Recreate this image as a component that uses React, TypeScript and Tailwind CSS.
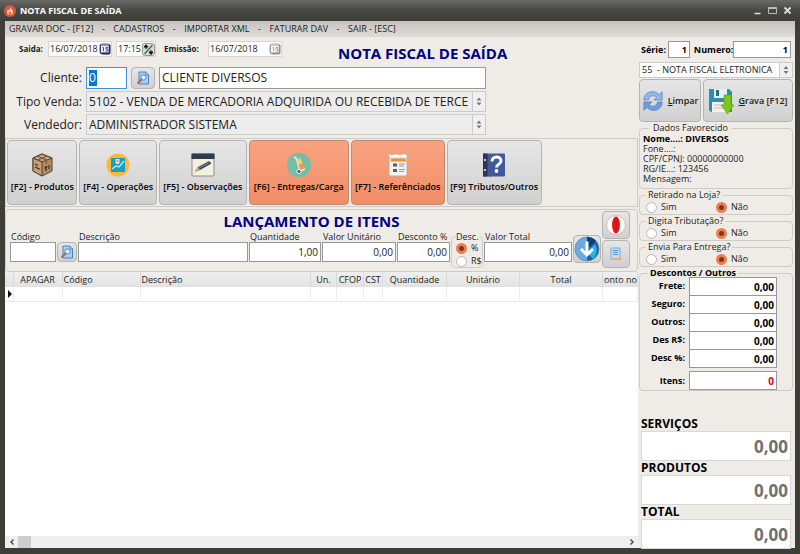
import React from 'react';

const menuItems = ['GRAVAR DOC - [F12]', 'CADASTROS', 'IMPORTAR XML', 'FATURAR DAV', 'SAIR - [ESC]'];

const columns = [
  { label: '', width: 'w-2', align: 'text-left' },
  { label: 'APAGAR', width: 'w-[49px]', align: 'text-center' },
  { label: 'Código', width: 'w-[78px]', align: 'text-left' },
  { label: 'Descrição', width: 'w-auto', align: 'text-left' },
  { label: 'Un.', width: 'w-[26px]', align: 'text-center' },
  { label: 'CFOP', width: 'w-[27px]', align: 'text-center' },
  { label: 'CST', width: 'w-[19px]', align: 'text-center' },
  { label: 'Quantidade', width: 'w-16', align: 'text-center' },
  { label: 'Unitário', width: 'w-[73px]', align: 'text-center' },
  { label: 'Total', width: 'w-[83px]', align: 'text-center' },
  { label: 'onto no', width: 'w-[35px]', align: 'text-left' },
];

const discounts = [
  { id: 'frete', label: 'Frete:', value: '0,00' },
  { id: 'seguro', label: 'Seguro:', value: '0,00' },
  { id: 'outros', label: 'Outros:', value: '0,00' },
  { id: 'desrs', label: 'Des R$:', value: '0,00' },
  { id: 'descpct', label: 'Desc %:', value: '0,00' },
];

const buttonStyle = 'rounded border border-[#b4b4b4] bg-linear-to-b from-[#e6e6e6] to-[#d0d0d0]';
const fieldStyle = 'min-w-0 border border-[#989898] bg-white outline-none';

const FlameIcon = () => (
  <svg viewBox="0 0 24 24" className="h-3 w-3">
    <circle cx="12" cy="12" r="12" fill="#d9534a" />
    <path d="M12 3c1 4 6 6 6 11a6 6 0 0 1-12 0c0-3 2-4 2-6 1 1 2 2 2 3 2-2 3-5 2-8z" fill="#fbd08a" />
    <path d="M12 12c1 2 3 3 3 5a3 3 0 0 1-6 0c0-2 2-3 3-5z" fill="#e8744c" />
  </svg>
);

const CalendarIcon = ({ muted = false }) => (
  <svg viewBox="1 0 12 12" className={muted ? 'h-3 w-3 opacity-50 grayscale' : 'h-3 w-3'}>
    <rect x="1.500" y=".5" width="11" height="11" rx="3" fill="#d8d8d8" stroke="#aaa" />
    <rect x="2.500" y="2" width="9" height="8" fill="#eef0fa" stroke="#3a3f78" />
    <path d="M11.500 2v8.500h-8" fill="none" stroke="#20246a" strokeWidth="1.500" />
    <path d="M4.500 4.500h1v3.500M10 4.500H8v1.500h1.800V8H7.500" fill="none" stroke="#333a66" strokeWidth=".9" />
  </svg>
);

const PlusMinusIcon = () => (
  <svg viewBox="0 0 13 13" className="h-[13px] w-[13px]">
    <rect x=".5" y=".5" width="12" height="12" rx="2" fill="#d6dcd6" stroke="#999" />
    <path d="M2.500 11L10.500 2" stroke="#3f7a50" strokeWidth="1.500" />
    <path d="M4 6V3M2 4l2-2.200L6 4zM9 7v3M7 9l2 2.500L11 9z" fill="#111" stroke="#111" />
  </svg>
);

const SearchDocIcon = () => (
  <svg viewBox="0 0 14 14" className="h-3.5 w-3.5">
    <path d="M3 1h7l2.500 2.500V13H3z" fill="#a9cdf3" stroke="#4a83cc" />
    <path d="M10 1v3h2.500" fill="#e3f0fd" stroke="#4a83cc" />
    <circle cx="7.500" cy="6.500" r="2.600" fill="#e8f4ff" stroke="#5187c4" />
    <path d="M5.500 8.500L2 12" stroke="#a86b48" strokeWidth="1.800" strokeLinecap="round" />
  </svg>
);

const BoxIcon = () => (
  <svg viewBox="0 0 24 24" className="h-6 w-6">
    <path d="M12 1L22 5v13l-10 5L3 18V5z" fill="#b48a63" stroke="#54402f" />
    <path d="M12 1L22 5l-10 4L3 5z" fill="#d0aa80" stroke="#54402f" />
    <path d="M3 5l9 4v14l-9-5z" fill="#c79f78" stroke="#54402f" />
    <path d="M7 3l9.500 4v4M17 3L8 7" fill="none" stroke="#7a5b3f" strokeWidth="1.200" />
    <path d="M5 11l3 1.500M5 14l5 2.300M16 13v5M14.500 15l3-1.500M19 12v4" stroke="#3d2d20" strokeWidth="1.200" />
  </svg>
);

const OperationsIcon = () => (
  <svg viewBox="0 0 24 24" className="h-6 w-6">
    <circle cx="12" cy="12" r="11.500" fill="#fbb936" />
    <rect x="5" y="5" width="14" height="14" rx="1" fill="#159fc0" />
    <path d="M6 16l4-3 3 1 5-6" fill="none" stroke="#bdeaf2" strokeWidth="1.300" />
    <path d="M9.500 6h4v4l-2 1.500-2-1.500z" fill="#f4e3cd" />
    <circle cx="11.500" cy="8" r="1" fill="#e27d4e" />
  </svg>
);

const NotesIcon = () => (
  <svg viewBox="0 0 24 24" className="h-6 w-6">
    <rect x="1" y="1" width="22" height="22" rx="1" fill="#f4efdf" stroke="#8e8e86" />
    <path d="M.5.5h23V6H.5z" fill="#2e3d4d" />
    <path d="M4 18.500l3-4.500L18 8l2.500 2.500L9 17z" fill="#3b4a5b" />
    <path d="M4 19l3-5 2 3z" fill="#d5a77b" />
    <path d="M8 15l10-5.500" stroke="#7c94a8" />
  </svg>
);

const CartIcon = () => (
  <svg viewBox="0 0 24 24" className="h-6 w-6">
    <circle cx="12" cy="12" r="12" fill="#74bda8" />
    <path d="M7 4l2 1 4 13 5-2" fill="none" stroke="#f5f5ee" strokeWidth="1.400" />
    <path d="M9 7l4-2 2.500 5-4.500 2z" fill="#f6cf80" />
    <path d="M11.500 12l5-2 2 5-5.500 2z" fill="#e99c4e" />
    <circle cx="12" cy="18.500" r="2" fill="#3f4d55" stroke="#fff" />
  </svg>
);

const ReportIcon = () => (
  <svg viewBox="0 0 24 24" className="h-6 w-6">
    <path d="M3 2h18v20l-1 1H4l-1-1z" fill="#f4f3ef" stroke="#b9aca0" />
    <path d="M2 1l4 1 4-1 4 1 4-1 3 1v3H4z" fill="#fff" stroke="#c5b6a5" strokeWidth=".7" />
    <path d="M5 5.500h14l1.500 3h-16z" fill="#eb922f" />
    <path d="M7 10.500h4v3H7zM7 16h4v3H7z" fill="#56606c" />
    <path d="M13 11h6M13 13h5M13 16.500h6M13 18.500h5" stroke="#9a9a9a" />
  </svg>
);

const HelpBookIcon = () => (
  <svg viewBox="0 0 24 24" className="h-6 w-6">
    <rect x="1" y=".5" width="22" height="23" rx="1" fill="#3f5a9c" />
    <path d="M1 .5h4.500v23H1z" fill="#2c3455" />
    <circle cx="3" cy="7" r="1" fill="#fff" />
    <circle cx="3" cy="17" r="1" fill="#fff" />
    <path d="M10 8.500c0-6 9-6 9-.5 0 3.500-4.500 3-4.500 6.500" fill="none" stroke="#fff" strokeWidth="3" />
    <circle cx="14.500" cy="18" r="1.900" fill="#fff" />
    <path d="M7 23.500l2-2 1 2z" fill="#d22" />
  </svg>
);

const RefreshIcon = () => (
  <svg viewBox="0 0 24 24" className="h-[22px] w-[22px] shrink-0">
    <path d="M2 11C2 4 8 1 13 2c3 .5 4.500 2 5.500 3L22 2v9h-9l3-3c-3-3-8-2-9 3z" fill="#8db8e8" stroke="#5a86bb" strokeWidth=".8" />
    <path d="M22 13c0 7-6 10-11 9-3-.5-4.500-2-5.500-3L2 22v-9h9l-3 3c3 3 8 2 9-3z" fill="#6b9edb" stroke="#5a86bb" strokeWidth=".8" />
  </svg>
);

const SaveIcon = () => (
  <svg viewBox="0 0 26 26" className="h-[26px] w-[26px] shrink-0">
    <path d="M1 1h20l3 3v20H3l-2-2z" fill="#2f8cb5" />
    <path d="M6 1h13v9H6z" fill="#e5f1f6" />
    <path d="M8 2h3v6H8z" fill="#2b6d8c" />
    <path d="M4 14h17v10H4z" fill="#f4f1e8" />
    <path d="M6 17h10M6 20h9" stroke="#c3bba8" />
    <path d="M16 7h7v10h3l-6.500 9L13 17h3z" fill="#7ac720" stroke="#5aa514" strokeWidth=".6" />
  </svg>
);

const ArrowIcon = () => (
  <svg viewBox="0 0 26 26" className="h-[26px] w-[26px]">
    <circle cx="13" cy="13" r="12" fill="#1764ae" stroke="#777f88" />
    <path d="M13 1a12 12 0 0 0 0 24z" fill="#6baae0" />
    <path d="M13 1a12 12 0 0 1 9 4l-9 8z" fill="#0a3e80" />
    <path d="M21 8a12 12 0 0 1-2 15l-6-7z" fill="#22b4ed" />
    <path d="M13 5.500v13M7 13l6 6 6-6" fill="none" stroke="#fff" strokeWidth="3" />
  </svg>
);

const OperaIcon = () => (
  <svg viewBox="0 0 20 20" className="h-5 w-5">
    <circle cx="10" cy="10" r="9.500" fill="#fff" stroke="#e6a5a5" strokeWidth=".8" />
    <ellipse cx="10" cy="10" rx="4" ry="8.500" fill="#e31919" />
    <path d="M10 5v10" stroke="#c90f0f" strokeWidth="1.500" />
  </svg>
);

const ScrollIcon = () => (
  <svg viewBox="0 0 14 14" className="h-3.5 w-3.5">
    <path d="M2 1h9v11H2z" fill="#c5daf0" stroke="#86abd2" />
    <path d="M4 3.500h5M4 5.500h5M4 7.500h5" stroke="#5e97d1" />
    <path d="M4 11h8.500v2H4z" fill="#eeb25a" />
  </svg>
);

const UpDownIcon = () => (
  <svg viewBox="0 0 12 12" className="h-full w-3">
    <path d="M3.500 5L6 2l2.500 3zM3.500 7L6 10l2.500-3z" fill="#777" />
  </svg>
);

const toolbar = [
  { label: '[F2] - Produtos', icon: BoxIcon, grow: 'grow-[70]', active: false },
  { label: '[F4] - Operações', icon: OperationsIcon, grow: 'grow-[77]', active: false },
  { label: '[F5] - Observações', icon: NotesIcon, grow: 'grow-[88]', active: false },
  { label: '[F6] - Entregas/Carga', icon: CartIcon, grow: 'grow-[100]', active: true },
  { label: '[F7] - Referênciados', icon: ReportIcon, grow: 'grow-[94]', active: true },
  { label: '[F9] Tributos/Outros', icon: HelpBookIcon, grow: 'grow-[95]', active: false },
];

type SelectProps = { id: string; label: string; option: string; className: string };

const SelectBox = ({ id, label, option, className }: SelectProps) => (
  <div className={`relative flex min-w-0 border border-[#cbcbcb] ${className}`}>
    <select id={id} aria-label={label} className="w-full appearance-none truncate bg-transparent pr-3 pl-0.5 outline-none">
      <option>{option}</option>
    </select>
    <span className="pointer-events-none absolute inset-y-0 right-0 border-l border-[#cbcbcb] bg-[#f0f0f0]">
      <UpDownIcon />
    </span>
  </div>
);

type RadioProps = { name: string; label: string; checked?: boolean };

const Radio = ({ name, label, checked = false }: RadioProps) => (
  <label className="flex items-center gap-1">
    <input
      type="radio"
      name={name}
      defaultChecked={checked}
      className="h-[11px] w-[11px] shrink-0 appearance-none rounded-full border border-[#b5b5b5] bg-white checked:border-[3px] checked:border-[#ee7c50] checked:bg-[#7b3622]"
    />
    {label}
  </label>
);

type ItemFieldProps = { id: string; label: string; value?: string; className: string };

const ItemField = ({ id, label, value = '', className }: ItemFieldProps) => (
  <div className={`flex min-w-0 flex-col ${className}`}>
    <label htmlFor={id} className="pl-px leading-[11px] whitespace-nowrap">{label}</label>
    <input id={id} defaultValue={value} className={`${fieldStyle} h-5 w-full px-0.5 text-right text-[10px]`} />
  </div>
);

const YesNoGroup = ({ name, title }: { name: string; title: string }) => (
  <fieldset className="rounded border border-[#cfccc8] px-1.5 pb-px">
    <legend className="px-0.5 leading-3">{title}</legend>
    <div className="grid grid-cols-2 leading-3">
      <Radio name={name} label="Sim" />
      <Radio name={name} label="Não" checked />
    </div>
  </fieldset>
);

const TotalBox = ({ id, label }: { id: string; label: string }) => (
  <div className="flex flex-col">
    <label htmlFor={id} className="text-xs leading-[14px] font-bold text-black">{label}</label>
    <input
      id={id}
      defaultValue="0,00"
      readOnly
      className="h-[30px] w-full border border-[#d8d8d8] bg-white px-0.5 text-right text-[17px] font-bold text-[#707070] outline-none"
    />
  </div>
);

const TitleBar = () => (
  <header className="flex h-[21px] shrink-0 items-center justify-between bg-linear-to-b from-[#696a65] via-[#484843] to-[#3e3e39] px-1 text-white">
    <div className="flex items-center gap-1">
      <FlameIcon />
      <h1 className="text-[9px] font-bold">NOTA FISCAL DE SAÍDA</h1>
    </div>
    <div className="flex gap-1.5 pr-1">
      <button aria-label="Minimizar">
        <svg viewBox="0 0 9 9" className="h-[9px] w-[9px]"><path d="M1.500 7.500h6" stroke="#ddd" strokeWidth="1.500" /></svg>
      </button>
      <button aria-label="Maximizar">
        <svg viewBox="0 0 9 9" className="h-[9px] w-[9px]"><path d="M.5 1.500h8v6h-8zM.5 2.500h8" fill="none" stroke="#bbb" /></svg>
      </button>
      <button aria-label="Fechar">
        <svg viewBox="0 0 9 9" className="h-[9px] w-[9px]"><path d="M1.500 1.500l6 6M7.500 1.500l-6 6" stroke="#ddd" strokeWidth="1.800" /></svg>
      </button>
    </div>
  </header>
);

const DocumentForm = () => (
  <section className="flex flex-col gap-0.5 pt-1 pb-[3px]">
    <div className="flex h-6 items-start">
      <label htmlFor="saida" className="ml-3.5 w-[29px] pt-0.5 text-[8px] leading-3 font-bold">Saida:</label>
      <div className="flex h-4 w-16 items-center border border-[#d5d5d5] bg-white">
        <input id="saida" defaultValue="16/07/2018" className="w-full min-w-0 pl-px outline-none" />
        <button aria-label="Calendário" className="shrink-0"><CalendarIcon /></button>
      </div>
      <div className="ml-1 flex h-4 w-10 items-center border border-[#d5d5d5] bg-white">
        <input aria-label="Hora" defaultValue="17:15" className="w-full min-w-0 pl-px outline-none" />
        <button aria-label="Ajustar hora" className="shrink-0"><PlusMinusIcon /></button>
      </div>
      <label htmlFor="emissao" className="ml-2 w-11 pt-0.5 text-[8px] leading-3 font-bold">Emissão:</label>
      <div className="flex h-4 w-[74px] items-center border border-[#d5d5d5] bg-white">
        <input id="emissao" defaultValue="16/07/2018" className="w-full min-w-0 pl-px outline-none" />
        <button aria-label="Calendário" className="shrink-0"><CalendarIcon muted /></button>
      </div>
      <h2 className="ml-14 pt-0.5 text-[15px] leading-5 font-bold whitespace-nowrap text-[#000080]">NOTA FISCAL DE SAÍDA</h2>
    </div>
    <div className="grid w-[76%] grid-cols-[75px_1fr] items-center gap-x-1 gap-y-0.5 pl-0.5 text-xs">
      <label htmlFor="cliente" className="text-right">Cliente:</label>
      <div className="flex h-[22px] gap-1">
        <div className="flex w-[41px] items-center border border-[#3f93dc] bg-white pl-0.5">
          <input id="cliente" defaultValue="0" className="h-4 w-2 bg-[#0078d7] text-white outline-none" />
        </div>
        <button aria-label="Buscar cliente" className={`${buttonStyle} grid w-6 place-items-center`}><SearchDocIcon /></button>
        <input aria-label="Nome do cliente" defaultValue="CLIENTE DIVERSOS" className={`${fieldStyle} flex-1 px-0.5`} />
      </div>
      <label htmlFor="tipo" className="text-right">Tipo Venda:</label>
      <SelectBox id="tipo" label="Tipo Venda" option="5102 - VENDA DE MERCADORIA ADQUIRIDA OU RECEBIDA DE TERCE" className="h-[21px] bg-[#ececec]" />
      <label htmlFor="vendedor" className="text-right">Vendedor:</label>
      <SelectBox id="vendedor" label="Vendedor" option="ADMINISTRADOR SISTEMA" className="h-[21px] bg-[#ececec]" />
    </div>
  </section>
);

const Toolbar = () => (
  <nav className="border border-[#cfccc8] p-px">
    <div className="flex w-[85%] gap-0.5">
      {toolbar.map(({ label, icon: Icon, grow, active }) => (
        <button
          key={label}
          className={`flex h-[65px] min-w-0 basis-0 flex-col items-center justify-center gap-1 rounded border text-[9px] leading-3 font-semibold whitespace-nowrap text-black ${grow} ${
            active
              ? 'border-[#bf8a75] bg-linear-to-b from-[#f9a280] to-[#f18e68]'
              : 'border-[#b4b4b4] bg-linear-to-b from-[#e6e6e6] to-[#d0d0d0]'
          }`}
        >
          <Icon />
          {label}
        </button>
      ))}
    </div>
  </nav>
);

const ItemEntry = () => (
  <section className="mt-0.5 flex h-[63px] shrink-0 gap-px rounded border border-[#cfccc8] pt-px pr-[7px] pl-1">
    <div className="min-w-0 flex-1">
      <h2 className="pl-3 text-center text-[15px] leading-5 font-bold text-[#000080]">LANÇAMENTO DE ITENS</h2>
      <div className="flex gap-px">
        <ItemField id="codigo" label="Código" className="w-[46px]" />
        <button aria-label="Buscar produto" className={`${buttonStyle} mt-[11px] grid h-5 w-5 shrink-0 place-items-center`}><SearchDocIcon /></button>
        <ItemField id="descricao" label="Descrição" className="flex-1" />
        <ItemField id="quantidade" label="Quantidade" value="1,00" className="w-[72px]" />
        <ItemField id="unitario" label="Valor Unitário" value="0,00" className="w-[74px]" />
        <ItemField id="desconto" label="Desconto %" value="0,00" className="w-[53px]" />
        <fieldset className="h-[37px] w-8 shrink-0 rounded border border-[#cfccc8] pl-1">
          <legend className="leading-[11px]">Desc.</legend>
          <div className="flex flex-col gap-px leading-3">
            <Radio name="desc" label="%" checked />
            <Radio name="desc" label="R$" />
          </div>
        </fieldset>
        <ItemField id="total-item" label="Valor Total" value="0,00" className="w-[88px]" />
        <button aria-label="Incluir item" className={`${buttonStyle} mt-1 grid h-7 w-7 shrink-0 place-items-center`}><ArrowIcon /></button>
      </div>
    </div>
    <div className="flex flex-col gap-px">
      <button aria-label="Cancelar" className={`${buttonStyle} grid h-7 w-7 place-items-center`}><OperaIcon /></button>
      <button aria-label="Listar" className={`${buttonStyle} grid h-7 w-7 place-items-center`}><ScrollIcon /></button>
    </div>
  </section>
);

const ItemsGrid = () => (
  <section className="flex min-h-0 flex-1 flex-col bg-white">
    <div className="flex-1 overflow-hidden">
      <table className="w-full table-fixed border-collapse">
        <thead>
          <tr className="h-[15px] bg-linear-to-b from-[#efefef] to-[#e2e2e2]">
            {columns.map(({ label, width, align }) => (
              <th key={label} className={`border-r border-[#d9d9d9] px-px font-normal whitespace-nowrap ${width} ${align}`}>
                {label}
              </th>
            ))}
          </tr>
        </thead>
        <tbody>
          <tr className="h-[14px] border-b border-[#e8e8e8]">
            {columns.map(({ label }, i) => (
              <td key={label} className="border-r border-[#ededed]">
                {i === 0 && (
                  <svg viewBox="0 0 6 8" className="ml-0.5 h-2 w-1.5"><path d="M1 0l4 4-4 4z" fill="#111" /></svg>
                )}
              </td>
            ))}
          </tr>
        </tbody>
      </table>
    </div>
    <div className="flex h-3 items-center bg-[#efefef]">
      <button aria-label="Rolar para a esquerda" className="grid h-3 w-[13px] place-items-center">
        <svg viewBox="0 0 6 6" className="h-1.5 w-1.5"><path d="M4.500.5L2 3l2.500 2.500" fill="none" stroke="#444" strokeWidth="1.400" /></svg>
      </button>
      <div className="h-full flex-1"><div className="h-full w-[13px] bg-[#cdcdcd]" /></div>
      <button aria-label="Rolar para a direita" className="grid h-3 w-[13px] place-items-center">
        <svg viewBox="0 0 6 6" className="h-1.5 w-1.5"><path d="M1.500.5L4 3 1.500 5.500" fill="none" stroke="#444" strokeWidth="1.400" /></svg>
      </button>
    </div>
  </section>
);

const SidePanel = () => (
  <aside className="flex w-[157px] shrink-0 flex-col pt-1 pr-0.5 pl-px">
    <div className="flex items-center text-[9px] font-bold text-black">
      <label htmlFor="serie" className="w-[30px] pl-0.5">Série:</label>
      <input id="serie" defaultValue="1" className={`${fieldStyle} h-[17px] w-[22px] px-0.5 text-right`} />
      <label htmlFor="numero" className="flex-1 pl-1">Numero:</label>
      <input id="numero" defaultValue="1" className={`${fieldStyle} mr-0.5 h-[17px] w-[59px] px-0.5 text-right`} />
    </div>
    <SelectBox id="modelo" label="Modelo" option={'55 \u00a0- NOTA FISCAL ELETRONICA'} className="mt-1 h-4 bg-white text-[9px]" />
    <div className="mt-px flex h-[43px] gap-0.5">
      <button className={`${buttonStyle} flex w-[62px] items-center justify-center gap-1 font-semibold`}>
        <RefreshIcon />
        <span><span className="underline">L</span>impar</span>
      </button>
      <button className={`${buttonStyle} flex flex-1 items-center justify-center gap-1 font-semibold`}>
        <SaveIcon />
        <span><span className="underline">G</span>rava [F12]</span>
      </button>
    </div>
    <fieldset className="rounded border border-[#cfccc8] px-[3px] pb-1">
      <legend className="ml-1.5 px-1 leading-3">Dados Favorecido</legend>
      <div className="leading-[10px]">
        <p className="font-bold text-black">Nome....: DIVERSOS</p>
        <p>Fone....:</p>
        <p>CPF/CPNJ: 00000000000</p>
        <p>RG/IE...: 123456</p>
        <p>Mensagem:</p>
      </div>
    </fieldset>
    <YesNoGroup name="retirado" title="Retirado na Loja?" />
    <YesNoGroup name="tributacao" title="Digita Tributação?" />
    <YesNoGroup name="entrega" title="Envia Para Entrega?" />
    <fieldset className="rounded border border-[#cfccc8] pr-[15px] text-black">
      <legend className="ml-2 px-0.5 leading-3 font-bold">Descontos / Outros</legend>
      <div className="-mt-0.5 flex flex-col font-bold">
        {discounts.map(({ id, label, value }) => (
          <div key={id} className="flex items-center gap-1">
            <label htmlFor={id} className="flex-1 text-right">{label}</label>
            <input id={id} defaultValue={value} className={`${fieldStyle} -mb-px h-[19px] w-[88px] px-0.5 text-right text-[10px]`} />
          </div>
        ))}
        <div className="mt-1 flex items-center gap-1">
          <label htmlFor="itens" className="flex-1 text-right">Itens:</label>
          <input id="itens" defaultValue="0" className={`${fieldStyle} h-[19px] w-[88px] px-0.5 text-right text-[10px] text-red-600`} />
        </div>
      </div>
    </fieldset>
    <div className="mt-auto -mb-px flex flex-col px-0.5">
      <TotalBox id="servicos" label="SERVIÇOS" />
      <TotalBox id="produtos" label="PRODUTOS" />
      <TotalBox id="total" label="TOTAL" />
    </div>
  </aside>
);

export default function App() {
  return (
    <div className="flex h-screen flex-col overflow-hidden bg-[#3e3e39] font-['Open_Sans','Noto_Sans',sans-serif] text-[9px] text-[#222]">
      <TitleBar />
      <main className="mx-[5px] mb-1.5 flex min-h-0 flex-1 flex-col bg-[#efece8]">
        <nav className="flex h-4 shrink-0 items-center bg-linear-to-b from-[#c6c3c0] to-[#dfdcd8] pl-1 text-[9px]">
          {menuItems.map((item, i) => (
            <React.Fragment key={item}>
              {i > 0 && <span className="w-5 text-center">-</span>}
              <a href="#" className="whitespace-nowrap">{item}</a>
            </React.Fragment>
          ))}
        </nav>
        <div className="flex min-h-0 flex-1">
          <div className="flex min-w-0 flex-1 flex-col">
            <DocumentForm />
            <Toolbar />
            <ItemEntry />
            <ItemsGrid />
          </div>
          <SidePanel />
        </div>
      </main>
    </div>
  );
}
